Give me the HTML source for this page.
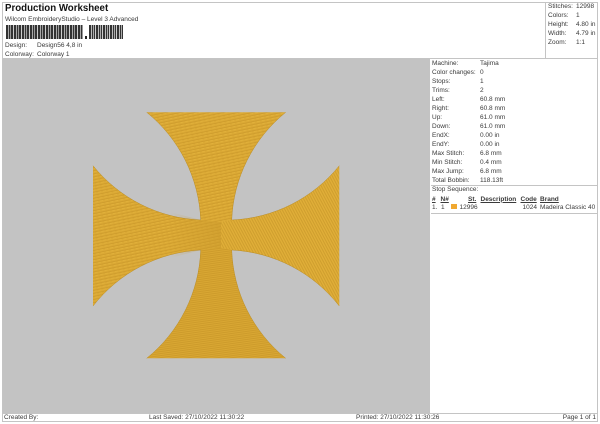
<!DOCTYPE html>
<html>
<head>
<meta charset="utf-8">
<style>
html,body{margin:0;padding:0;background:#fff}
#p{position:relative;width:600px;height:424px;overflow:hidden;background:#fff;font-family:"Liberation Sans",sans-serif;font-size:6.5px;color:#3a3a3a}
.t{position:absolute;white-space:nowrap;line-height:9px;height:9px}
.l{position:absolute;background:#c4c4c4}
</style>
</head>
<body>
<div id="p">
<div class="l" style="left:2px;top:2px;width:596px;height:1px"></div>
<div class="l" style="left:2px;top:421px;width:596px;height:1px"></div>
<div class="l" style="left:2px;top:2px;width:1px;height:420px"></div>
<div class="l" style="left:597px;top:2px;width:1px;height:420px"></div>
<div class="l" style="left:2px;top:58px;width:596px;height:1px"></div>
<div class="l" style="left:545px;top:2px;width:1px;height:56px"></div>
<div class="l" style="left:431px;top:185px;width:166px;height:1px"></div>
<div class="l" style="left:431px;top:213px;width:166px;height:1px"></div>
<div class="l" style="left:3px;top:59px;width:427px;height:354px;background:#c3c3c3"></div>
<div class="l" style="left:2px;top:413px;width:596px;height:1px"></div>

<div class="t" style="left:5px;top:2px;font-size:9.7px;font-weight:bold;color:#111;line-height:13px;height:13px">Production Worksheet</div>
<div class="t" style="left:5px;top:15px">Wilcom EmbroideryStudio – Level 3 Advanced</div>
<div style="position:absolute;left:6px;top:25px;width:77px;height:14px;background:repeating-linear-gradient(90deg,#333 0 2px,#aaa 2px 3px,#333 3px 4px,#999 4px 5px,#333 5px 7px,#ccc 7px 8px)"></div>
<div style="position:absolute;left:89px;top:25px;width:34px;height:14px;background:repeating-linear-gradient(90deg,#333 0 2px,#bbb 2px 3px,#333 3px 4px,#aaa 4px 5px,#333 5px 6px,#ccc 6px 7px)"></div>
<div style="position:absolute;left:85px;top:36px;width:2px;height:3px;background:#222"></div>
<div class="t" style="left:5px;top:40.500px">Design:</div>
<div class="t" style="left:37px;top:40.500px">Design56 4,8 in</div>
<div class="t" style="left:5px;top:49.500px">Colorway:</div>
<div class="t" style="left:37px;top:49.500px">Colorway 1</div>

<div class="t" style="left:548px;top:2px">Stitches:</div><div class="t" style="left:576px;top:2px">12998</div>
<div class="t" style="left:548px;top:11px">Colors:</div><div class="t" style="left:576px;top:11px">1</div>
<div class="t" style="left:548px;top:20px">Height:</div><div class="t" style="left:576px;top:20px">4.80 in</div>
<div class="t" style="left:548px;top:29px">Width:</div><div class="t" style="left:576px;top:29px">4.79 in</div>
<div class="t" style="left:548px;top:38px">Zoom:</div><div class="t" style="left:576px;top:38px">1:1</div>

<div class="t" style="left:432px;top:59px">Machine:</div><div class="t" style="left:480px;top:59px">Tajima</div>
<div class="t" style="left:432px;top:68px">Color changes:</div><div class="t" style="left:480px;top:68px">0</div>
<div class="t" style="left:432px;top:77px">Stops:</div><div class="t" style="left:480px;top:77px">1</div>
<div class="t" style="left:432px;top:86px">Trims:</div><div class="t" style="left:480px;top:86px">2</div>
<div class="t" style="left:432px;top:95px">Left:</div><div class="t" style="left:480px;top:95px">60.8 mm</div>
<div class="t" style="left:432px;top:104px">Right:</div><div class="t" style="left:480px;top:104px">60.8 mm</div>
<div class="t" style="left:432px;top:113px">Up:</div><div class="t" style="left:480px;top:113px">61.0 mm</div>
<div class="t" style="left:432px;top:122px">Down:</div><div class="t" style="left:480px;top:122px">61.0 mm</div>
<div class="t" style="left:432px;top:131px">EndX:</div><div class="t" style="left:480px;top:131px">0.00 in</div>
<div class="t" style="left:432px;top:140px">EndY:</div><div class="t" style="left:480px;top:140px">0.00 in</div>
<div class="t" style="left:432px;top:149px">Max Stitch:</div><div class="t" style="left:480px;top:149px">6.8 mm</div>
<div class="t" style="left:432px;top:158px">Min Stitch:</div><div class="t" style="left:480px;top:158px">0.4 mm</div>
<div class="t" style="left:432px;top:167px">Max Jump:</div><div class="t" style="left:480px;top:167px">6.8 mm</div>
<div class="t" style="left:432px;top:176px">Total Bobbin:</div><div class="t" style="left:480px;top:176px">118.13ft</div>
<div class="t" style="left:432px;top:185px">Stop Sequence:</div>

<div class="t" style="left:432px;top:194.500px;font-weight:bold;text-decoration:underline">#</div>
<div class="t" style="left:440.500px;top:194.500px;font-weight:bold;text-decoration:underline">N#</div>
<div class="t" style="left:468px;top:194.500px;font-weight:bold;text-decoration:underline">St.</div>
<div class="t" style="left:480.500px;top:194.500px;font-weight:bold;text-decoration:underline">Description</div>
<div class="t" style="left:520.500px;top:194.500px;font-weight:bold;text-decoration:underline">Code</div>
<div class="t" style="left:540px;top:194.500px;font-weight:bold;text-decoration:underline">Brand</div>
<div class="t" style="left:432px;top:202.500px">1.</div>
<div class="t" style="left:441px;top:202.500px">1</div>
<div style="position:absolute;left:451px;top:204px;width:6px;height:5px;background:#f0a830"></div>
<div class="t" style="left:459.500px;top:202.500px">12996</div>
<div class="t" style="left:522.500px;top:202.500px">1024</div>
<div class="t" style="left:540px;top:202.500px">Madeira Classic 40</div>

<div class="t" style="left:4px;top:412.500px">Created By:</div>
<div class="t" style="left:149px;top:412.500px">Last Saved: 27/10/2022 11:30:22</div>
<div class="t" style="left:356px;top:412.500px">Printed: 27/10/2022 11:30:26</div>
<div class="t" style="right:4px;top:412.500px">Page 1 of 1</div>

<svg style="position:absolute;left:0;top:0" width="600" height="424" viewBox="0 0 600 424">
<defs>
<pattern id="a" width="5" height="3" patternUnits="userSpaceOnUse" patternTransform="rotate(-12)">
<rect width="5" height="3" fill="#dba935"/>
<rect y="0" width="5" height="1" fill="#cf9d2d"/>
<rect x="1" y="1" width="3" height="1" fill="#e1b03a"/>
</pattern>
<pattern id="b" width="3" height="2.4" patternUnits="userSpaceOnUse" patternTransform="rotate(62)">
<rect width="3" height="2.4" fill="#e0ae38"/>
<rect width="3" height="1" fill="#cf9e2e"/>
</pattern>
<pattern id="c" width="3" height="2" patternUnits="userSpaceOnUse" patternTransform="rotate(-8)">
<rect width="3" height="2" fill="#d9a733"/>
<rect width="3" height="1" fill="#cd9b2b"/>
</pattern>
<linearGradient id="g" x1="0" x2="1" y1="0" y2="0">
<stop offset="0" stop-color="#c9982a" stop-opacity="0"/>
<stop offset="1" stop-color="#c9982a" stop-opacity=".5"/>
</linearGradient>
</defs>
<path d="M146.700 112.300H285.700A146 146 0 0 0 231.700 220V225H200.700V220A146 146 0 0 0 146.700 112.300Z" fill="url(#a)"/>
<path d="M200.700 245H231.700V250A146 146 0 0 0 285.700 358.300H146.700A146 146 0 0 0 200.700 250Z" fill="url(#c)"/>
<path d="M93 165.700A146 146 0 0 0 200.700 220Q212 222 221 222V248Q212 248 200.700 250A146 146 0 0 0 93 306Z" fill="url(#a)"/>
<path d="M170 212L200.700 220Q212 222 221 222V248Q212 248 200.700 250L170 258Z" fill="url(#g)"/>
<path d="M339.300 165.700V306A146 146 0 0 0 231.700 250Q226 248.500 221 248V222Q226 221 231.700 220A146 146 0 0 0 339.300 165.700Z" fill="url(#b)"/>
<path d="M146.700 112.300A146 146 0 0 1 200.700 220A146 146 0 0 1 93 165.700M285.700 112.300A146 146 0 0 0 231.700 220A146 146 0 0 0 339.300 165.700M93 306A146 146 0 0 1 200.700 250A146 146 0 0 1 146.700 358.300M339.300 306A146 146 0 0 0 231.700 250A146 146 0 0 0 285.700 358.300" fill="none" stroke="#bb8d24" stroke-width=".5"/>
</svg>
</div>
</body>
</html>
